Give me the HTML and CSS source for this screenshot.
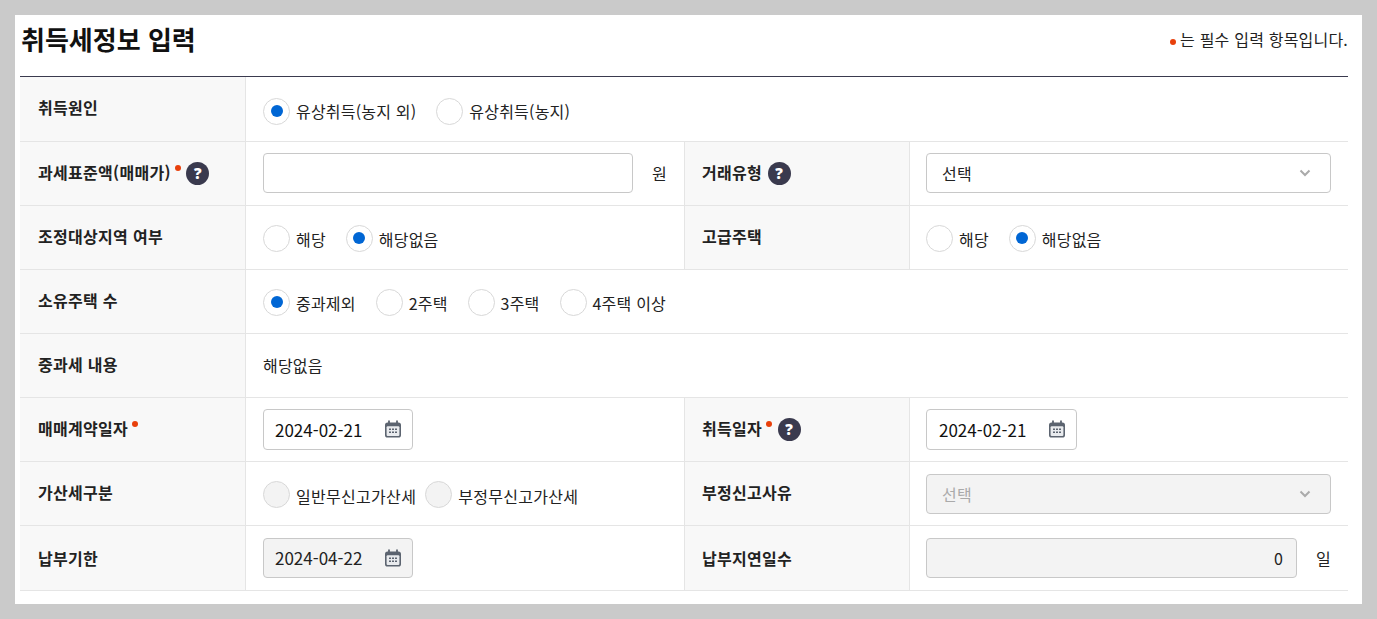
FILE: index.html
```html
<!DOCTYPE html>
<html lang="ko">
<head>
<meta charset="utf-8">
<title>취득세정보 입력</title>
<link rel="stylesheet" href="styles.css">
</head>
<body>
<svg class="defs" width="0" height="0" aria-hidden="true">
  <symbol id="cal" viewBox="0 0 16 18">
    <path d="M4 .5v4M12 .5v4" stroke="#5c6470" stroke-width="1.8" fill="none"/>
    <rect x="0" y="2.4" width="16" height="15.2" rx="2.6" fill="#5c6470"/>
    <rect x="1.6" y="6.2" width="12.8" height="9.8" rx="1" fill="#e9ebee"/>
    <path d="M4 8.6h2v1.5H4zM7 8.6h2v1.5H7zM10 8.6h2v1.5h-2zM4 11.4h2v1.5H4zM7 11.4h2v1.5H7zM10 11.4h2v1.5h-2z" fill="#5c6470"/>
  </symbol>
  <symbol id="chev" viewBox="0 0 12 8">
    <path d="M1.5 1.5 6 6l4.5-4.5" stroke="#aaaaaa" stroke-width="2" fill="none"/>
  </symbol>
</svg>
<main class="panel">
  <header class="head">
    <h1 class="title">취득세정보 입력</h1>
    <p class="legend"><i class="req legend-dot"></i>는 필수 입력 항목입니다.</p>
  </header>
  <table class="form">
    <colgroup><col class="c1"><col class="c2"><col class="c3"><col class="c4"></colgroup>
    <tbody>
      <tr class="tall">
        <th>취득원인</th>
        <td colspan="3" class="down">
          <div class="radios">
            <label class="radio on"><i></i><span>유상취득(농지 외)</span></label>
            <label class="radio"><i></i><span>유상취득(농지)</span></label>
          </div>
        </td>
      </tr>
      <tr class="up">
        <th><span class="lab">과세표준액(매매가)<i class="req"></i><b class="help">?</b></span></th>
        <td><div class="with-unit"><div class="box grow"></div><span class="unit">원</span></div></td>
        <th><span class="lab">거래유형<b class="help">?</b></span></th>
        <td><div class="box select"><span>선택</span><svg class="chev"><use href="#chev"/></svg></div></td>
      </tr>
      <tr>
        <th>조정대상지역 여부</th>
        <td><div class="radios"><label class="radio"><i></i><span>해당</span></label><label class="radio on"><i></i><span>해당없음</span></label></div></td>
        <th>고급주택</th>
        <td><div class="radios"><label class="radio"><i></i><span>해당</span></label><label class="radio on"><i></i><span>해당없음</span></label></div></td>
      </tr>
      <tr>
        <th>소유주택 수</th>
        <td colspan="3">
          <div class="radios">
            <label class="radio on"><i></i><span>중과제외</span></label>
            <label class="radio"><i></i><span>2주택</span></label>
            <label class="radio"><i></i><span>3주택</span></label>
            <label class="radio"><i></i><span>4주택 이상</span></label>
          </div>
        </td>
      </tr>
      <tr>
        <th>중과세 내용</th>
        <td colspan="3"><span class="plain">해당없음</span></td>
      </tr>
      <tr class="up">
        <th><span class="lab">매매계약일자<i class="req"></i></span></th>
        <td><div class="box date high"><span>2024-02-21</span><svg class="cal"><use href="#cal"/></svg></div></td>
        <th><span class="lab">취득일자<i class="req"></i><b class="help">?</b></span></th>
        <td><div class="box date high wide"><span>2024-02-21</span><svg class="cal"><use href="#cal"/></svg></div></td>
      </tr>
      <tr>
        <th>가산세구분</th>
        <td><div class="radios narrow"><label class="radio off"><i></i><span>일반무신고가산세</span></label><label class="radio off"><i></i><span>부정무신고가산세</span></label></div></td>
        <th>부정신고사유</th>
        <td><div class="box select dis muted"><span>선택</span><svg class="chev"><use href="#chev"/></svg></div></td>
      </tr>
      <tr class="tall">
        <th>납부기한</th>
        <td><div class="box date dis"><span>2024-04-22</span><svg class="cal"><use href="#cal"/></svg></div></td>
        <th>납부지연일수</th>
        <td><div class="with-unit"><div class="box grow dis num">0</div><span class="unit">일</span></div></td>
      </tr>
    </tbody>
  </table>
</main>
</body>
</html>
```
FILE: styles.css
```css
* { box-sizing: border-box; }
html, body { margin: 0; height: 100%; }
body {
  background: #cacaca;
  padding: 15px;
  font-family: "Noto Sans CJK KR", "Noto Sans", sans-serif;
  font-size: 16px;
  letter-spacing: .2px;
  color: #222;
  overflow: hidden;
}
.defs { position: absolute; }
.panel {
  background: #fff;
  height: 589px;
  padding: 0 14px 0 5px;
}
.head {
  display: flex;
  justify-content: space-between;
  align-items: flex-start;
  border-bottom: 1px solid #3a3a4e;
  height: 62px;
}
.title {
  margin: 4px 0 0 1px;
  font-size: 26px;
  line-height: 40px;
  font-weight: 700;
  letter-spacing: 0;
  color: #111;
}
.legend {
  margin: 12px 0 0;
  line-height: 24px;
  display: flex;
  align-items: center;
}
.req {
  display: inline-block;
  width: 6px;
  height: 6px;
  border-radius: 50%;
  background: #e8400c;
}
.legend-dot { margin: 6px 4px 0 0; }
.form {
  border-collapse: separate;
  border-spacing: 0;
  table-layout: fixed;
  width: 1328px;
}
.c1 { width: 226px; }
.c2 { width: 439px; }
.c3 { width: 225px; }
.c4 { width: 438px; }
.form tr { height: 64px; }
.form tr.tall { height: 65px; }
th, td {
  padding: 0;
  border-bottom: 1px solid #e5e5e5;
  border-right: 1px solid #e5e5e5;
  vertical-align: middle;
}
td:last-child { border-right: 0; }
th {
  background: #f8f8f8;
  padding: 0 0 3px 18px;
  text-align: left;
  font-weight: 700;
  font-size: 16px;
  letter-spacing: .3px;
  color: #222;
}
.form th + td + th { padding-left: 17px; }
.form tr:first-child th { padding-bottom: 5px; }
.form tr:last-child th { padding-bottom: 1px; }
td { padding: 0 17px; }
th + td + th + td { padding-left: 16px; }
.up td { padding-bottom: 1px; }
.down { padding-top: 3px; }
.lab { display: inline-flex; align-items: center; }
.lab .req { margin: -9px 0 0 4px; align-self: center; }
.help {
  width: 23px;
  height: 23px;
  margin: 3px 0 0 5.5px;
  border-radius: 50%;
  background: #3a3a4e;
  color: #fff;
  font-size: 15px;
  line-height: 23px;
  text-align: center;
  font-family: "Noto Sans", sans-serif;
}
.radios { display: flex; gap: 20px; padding-top: 1px; }
.radios.narrow { gap: 9px; letter-spacing: .3px; }
.radio { display: inline-flex; align-items: center; }
.radio span { margin-top: 1px; }
.narrow .radio span { margin-top: 3px; }
.down .radio span { margin-top: 0; }
.radio i {
  width: 27px;
  height: 27px;
  margin-right: 6px;
  border-radius: 50%;
  border: 1px solid #d8d8d8;
  background: #fff;
  display: flex;
  align-items: center;
  justify-content: center;
}
.radio.on i::after {
  content: "";
  width: 12px;
  height: 12px;
  border-radius: 50%;
  background: #0066d4;
}
.radio.off i { background: #f3f3f3; }
.plain { display: block; padding-bottom: 1px; }
.box {
  height: 40px;
  border: 1px solid #c8c8c8;
  border-radius: 4px;
  background: #fff;
  display: flex;
  align-items: center;
  justify-content: space-between;
}
.box.dis { background: #f3f3f3; }
.with-unit { display: flex; align-items: center; gap: 19px; }
.grow { flex: 1; }
.unit { width: 15px; }
.num { justify-content: flex-end; padding: 0 13px; }
.select { padding: 0 19px 0 15px; }
.muted { color: #aaa; }
.chev { width: 12px; height: 8px; }
.date { width: 150px; padding: 0 11px; font-size: 17px; letter-spacing: 0; color: #111; }
.date.high { height: 41px; }
.date.wide { width: 151px; padding-left: 12px; }
.dis.date { color: #222; }
.dis.date span { margin-top: -2px; }
.cal { width: 16px; height: 18px; }
```
